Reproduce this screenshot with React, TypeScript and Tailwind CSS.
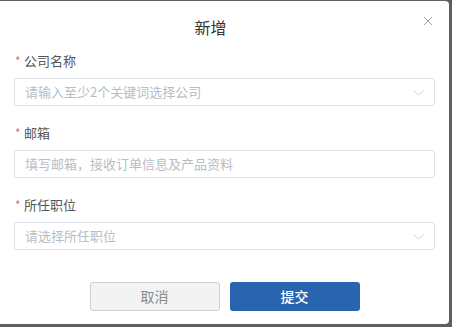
import React from "react";

const font = { fontFamily: '"Noto Sans CJK SC", "Noto Sans", sans-serif' };

function Chevron() {
  return (
    <svg width="11" height="6" viewBox="0 0 11 6" className="absolute left-[398px] top-[11px]">
      <path d="M0.5 0.5 L5.5 5 L10.5 0.5" fill="none" stroke="#c8ccd4" strokeWidth="1" />
    </svg>
  );
}

function Field({ label, placeholder, select, first }: { label: string; placeholder: string; select?: boolean; first?: boolean }) {
  return (
    <div className={first ? "mt-[12px]" : "mt-[17px]"}>
      <div className="h-[20px] leading-[20px] text-[13px] text-[#555] flex items-center">
        <span className="text-[#f56c6c] text-[12px] w-[10px] pl-[1px]">*</span>
        <span>{label}</span>
      </div>
      <div className="relative mt-[7px] h-[28px] border border-[#dcdfe6] rounded-[3px] flex items-center pl-[10px] text-[13px] text-[#b8bcc6]">
        {placeholder}
        {select && <Chevron />}
      </div>
    </div>
  );
}

export default function App() {
  return (
    <div className="w-[452px] h-[327px] bg-[#5e5e5e] pt-px" style={font}>
      <div className="relative w-[449px] h-[323px] bg-white rounded-r-[4px] pt-[14px] px-[14px]">
        <div className="h-[24px] leading-[24px] text-center text-[16px] text-[#333] pr-[28px]">新增</div>
        <svg width="10" height="10" viewBox="0 0 10 10" className="absolute left-[423px] top-[15px]">
          <path d="M1 1 L9 9 M9 1 L1 9" stroke="#a0a0a0" strokeWidth="1" />
        </svg>
        <Field first label="公司名称" placeholder="请输入至少2个关键词选择公司" select />
        <Field label="邮箱" placeholder="填写邮箱，接收订单信息及产品资料" />
        <Field label="所任职位" placeholder="请选择所任职位" select />
        <div className="flex justify-center gap-[10px] mt-[32px]">
          <div className="w-[130px] h-[29px] rounded-[3px] border border-[#cfcfcf] bg-[#f3f3f3] flex items-center justify-center text-[14px] text-[#8a8a8a]">取消</div>
          <div className="w-[130px] h-[29px] rounded-[3px] bg-[#2964ae] flex items-center justify-center text-[14px] text-white font-medium">提交</div>
        </div>
      </div>
    </div>
  );
}
